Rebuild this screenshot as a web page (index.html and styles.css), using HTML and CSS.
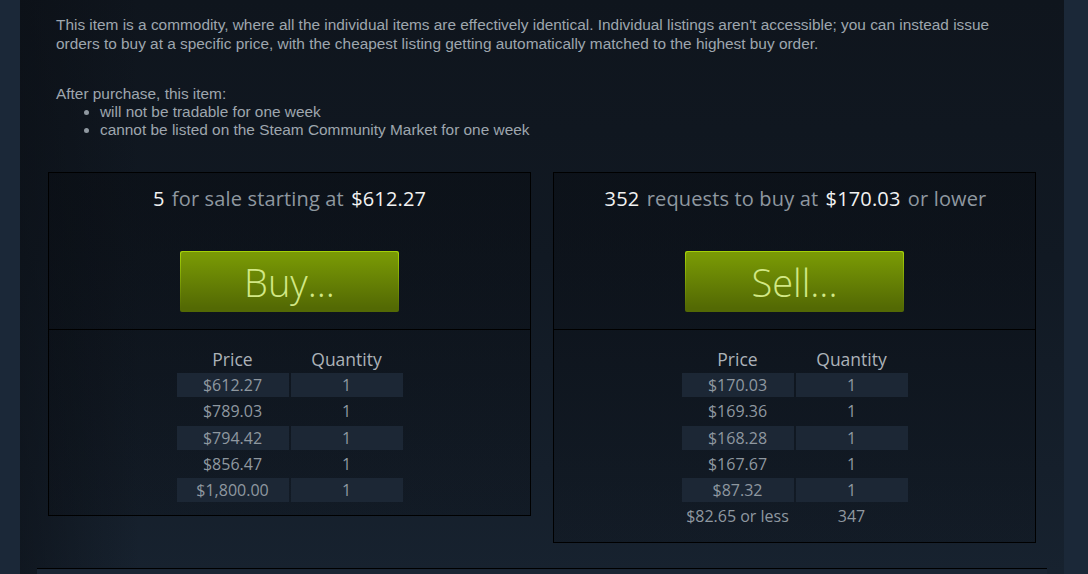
FILE: index.html
```html
<!DOCTYPE html>
<html>
<head>
<meta charset="utf-8">
<link rel="stylesheet" href="styles.css">
</head>
<body>
<div class="page">
  <div class="main">
    <div class="desc">
      <p class="intro">This item is a commodity, where all the individual items are effectively identical. Individual listings aren't accessible; you can instead issue orders to buy at a specific price, with the cheapest listing getting automatically matched to the highest buy order.</p>
      <p class="after">After purchase, this item:</p>
      <ul class="rules">
        <li>will not be tradable for one week</li>
        <li>cannot be listed on the Steam Community Market for one week</li>
      </ul>
    </div>
    <div class="orders">
      <div class="panel">
        <div class="panel-top">
          <div class="headline"><span class="hl">5</span> for sale starting at <span class="hl">$612.27</span></div>
          <a class="btn"><span>Buy...</span></a>
        </div>
        <div class="panel-bottom">
          <table class="book">
            <tr><th>Price</th><th>Quantity</th></tr>
            <tr class="shade"><td>$612.27</td><td>1</td></tr>
            <tr><td>$789.03</td><td>1</td></tr>
            <tr class="shade"><td>$794.42</td><td>1</td></tr>
            <tr><td>$856.47</td><td>1</td></tr>
            <tr class="shade"><td>$1,800.00</td><td>1</td></tr>
          </table>
        </div>
      </div>
      <div class="panel">
        <div class="panel-top">
          <div class="headline"><span class="hl">352</span> requests to buy at <span class="hl">$170.03</span> or lower</div>
          <a class="btn"><span>Sell...</span></a>
        </div>
        <div class="panel-bottom">
          <table class="book">
            <tr><th>Price</th><th>Quantity</th></tr>
            <tr class="shade"><td>$170.03</td><td>1</td></tr>
            <tr><td>$169.36</td><td>1</td></tr>
            <tr class="shade"><td>$168.28</td><td>1</td></tr>
            <tr><td>$167.67</td><td>1</td></tr>
            <tr class="shade"><td>$87.32</td><td>1</td></tr>
            <tr><td>$82.65 or less</td><td>347</td></tr>
          </table>
        </div>
      </div>
    </div>
    <div class="rule-line"></div>
  </div>
</div>
</body>
</html>
```
FILE: styles.css
```css
html, body {
  margin: 0;
  padding: 0;
  height: 100%;
  background: #1b2838;
}
body {
  font-family: "Liberation Sans", Arial, sans-serif;
  overflow: hidden;
}
.page {
  padding: 0 24px 0 20px;
  height: 574px;
}
.main {
  height: 574px;
  box-sizing: border-box;
  padding: 15px 28px 0 28px;
  background:
    linear-gradient(to right, rgba(10,14,20,0.55) 0px, rgba(10,14,20,0) 120px),
    linear-gradient(to bottom, #0f151d 0%, #111923 45%, #17222f 100%);
}
.desc {
  padding-left: 8px;
  color: #9ea6ae;
  font-size: 15.4px;
}
.intro {
  margin: 0;
  line-height: 19px;
  padding-right: 20px;
}
.after {
  margin: 32px 0 0 0;
  line-height: 18px;
}
.rules {
  margin: 0;
  padding-left: 44px;
  line-height: 18px;
}
.rules li::marker {
  color: #8f98a0;
}
.orders {
  display: flex;
  gap: 22px;
  align-items: flex-start;
  margin-top: 33px;
}
.panel {
  width: 483px;
  box-sizing: border-box;
  border: 1px solid #000;
  background: linear-gradient(to bottom, rgba(8,11,16,0.45), rgba(8,11,16,0.25));
  font-family: "Open Sans", "Noto Sans", sans-serif;
}
.panel-top {
  height: 157px;
  box-sizing: border-box;
  padding-top: 13px;
  display: flex;
  flex-direction: column;
  align-items: center;
  border-bottom: 1px solid #000;
}
.headline {
  font-size: 20px;
  line-height: 26px;
  color: #8f98a0;
  letter-spacing: 0.15px;
}
.hl {
  color: #f2f2f2;
  margin: 0 2px;
}
.btn {
  margin-top: 39px;
  display: block;
  width: 219px;
  height: 61px;
  box-sizing: border-box;
  padding: 1px;
  border-radius: 2px;
  background: linear-gradient(to bottom, #a4d007 5%, #536904 95%);
}
.btn span {
  display: block;
  height: 100%;
  border-radius: 2px;
  background: linear-gradient(to bottom, #799905 5%, #536904 95%);
  color: #d2e885;
  font-size: 38px;
  font-weight: 300;
  line-height: 60px;
  text-align: center;
}
.panel-bottom {
  padding: 14px 0 11px 0;
  display: flex;
  justify-content: center;
}
.book {
  border-spacing: 2px;
}
.book th {
  width: 112px;
  height: 25px;
  padding: 0;
  font-weight: normal;
  font-size: 17.5px;
  color: #acb2b8;
  text-align: center;
  vertical-align: middle;
}
.book td {
  width: 112px;
  height: 24.25px;
  padding: 0;
  font-size: 16px;
  color: #8f98a0;
  text-align: center;
  vertical-align: middle;
}
.book tr.shade td {
  background: #1c2735;
}
.rule-line {
  margin: 25px -11px 0 -11px;
  height: 5px;
  border-top: 1px solid #000;
  background: #1a2533;
}
```
